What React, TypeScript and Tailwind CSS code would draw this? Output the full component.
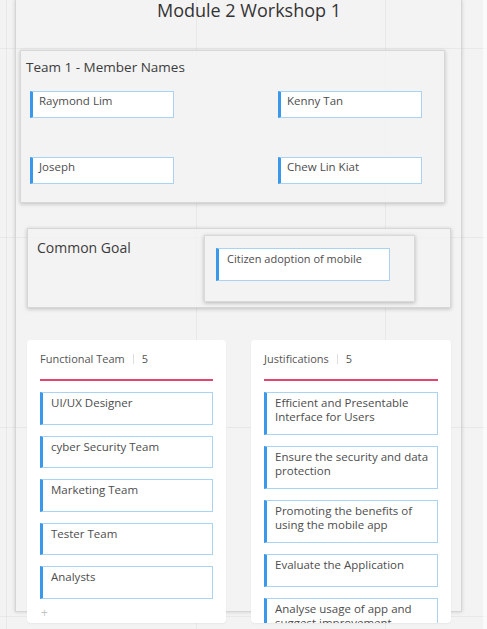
const members = ['Raymond Lim', 'Kenny Tan', 'Joseph', 'Chew Lin Kiat']

const columns = [
  {
    title: 'Functional Team',
    items: ['UI/UX Designer', 'cyber Security Team', 'Marketing Team', 'Tester Team', 'Analysts'],
    showAdd: true,
    width: 'w-[199px]',
  },
  {
    title: 'Justifications',
    items: [
      'Efficient and Presentable Interface for Users',
      'Ensure the security and data protection',
      'Promoting the benefits of using the mobile app',
      'Evaluate the Application',
      'Analyse usage of app and suggest improvement',
    ],
    showAdd: false,
    width: 'w-[200px]',
  },
]

function GridLines() {
  return (
    <div className="pointer-events-none absolute inset-0">
      <div className="absolute left-[6px] top-0 h-full w-px bg-black/[0.045]" />
      <div className="absolute left-[196px] top-0 h-full w-px bg-black/[0.045]" />
      <div className="absolute left-[385px] top-0 h-full w-px bg-black/[0.045]" />
      <div className="absolute left-0 top-[48px] h-px w-full bg-black/[0.045]" />
      <div className="absolute left-0 top-[237px] h-px w-full bg-black/[0.045]" />
      <div className="absolute left-0 top-[427px] h-px w-full bg-black/[0.045]" />
      <div className="absolute left-0 top-[616px] h-px w-full bg-black/[0.045]" />
    </div>
  )
}

function StickyCard({ text }: { text: string }) {
  return (
    <div className="min-h-[32.5px] border border-[#aad3f3] border-l-[3px] border-l-[#3a98ea] bg-white pb-[10px] pl-[8px] pr-[6px] pt-[3px] text-[11.5px] leading-[14px] text-[#4d4d4d]">
      {text}
    </div>
  )
}

function Column({ col }: { col: (typeof columns)[number] }) {
  return (
    <div className={`${col.width} h-[283px] overflow-hidden rounded-[4px] bg-white px-[13px] shadow-[0_1px_2px_rgba(0,0,0,0.05)]`}>
      <div className="flex items-center pb-[13px] pt-[12px] text-[11px] leading-[14px] text-[#555]">
        <span>{col.title}</span>
        <span className="mx-[8px] h-[10px] w-px bg-[#dedede]" />
        <span>5</span>
      </div>
      <div className="h-[1.5px] bg-[rgb(228,68,112)]" />
      <div className="mt-[11.5px] flex flex-col gap-[11px]">
        {col.items.map((t) => (
          <StickyCard key={t} text={t} />
        ))}
      </div>
      {col.showAdd && (
        <div className="mt-[8px] pl-[1px] text-[12px] leading-[12px] text-[#c4c4c4]">+</div>
      )}
    </div>
  )
}

export default function App() {
  return (
    <div className="relative h-[629px] w-[487px] overflow-hidden bg-[#f3f3f3] font-['Open_Sans',sans-serif]">
      <GridLines />
      <div className="absolute right-0 top-0 h-full w-[4px] bg-white/60" />

      <div className="relative ml-[15px] h-[612px] w-[447px] border-x border-b border-[#d6d6d6] shadow-[0_0_4px_rgba(0,0,0,0.16)]">
        <h1 className="pl-[21px] text-center text-[18px] leading-[20px] text-[#333]">Module 2 Workshop 1</h1>

        <div className="ml-[4px] mt-[30px] h-[153px] w-[425px] border border-[#d7d7d7] bg-[#f2f2f2]/80 shadow-[0_1px_4px_rgba(0,0,0,0.22)]">
          <div className="pl-[5px] pt-[9px] text-[13.5px] leading-[14px] text-[#3c3c3c]">Team 1 - Member Names</div>
          <div className="ml-[9px] mt-[17px] grid grid-cols-[144px_144px] gap-x-[104px] gap-y-[39px]">
            {members.map((m) => (
              <div
                key={m}
                className="h-[27px] border border-[#aad3f3] border-l-[3px] border-l-[#3a98ea] bg-white pl-[6px] pt-[1px] text-[11.5px] leading-[16px] text-[#4d4d4d]"
              >
                {m}
              </div>
            ))}
          </div>
        </div>

        <div className="ml-[11px] mt-[25px] flex h-[80px] w-[424px] border border-[#d7d7d7] bg-[#f2f2f2]/80 shadow-[0_1px_4px_rgba(0,0,0,0.22)]">
          <div className="w-[176px] pl-[9px] pt-[12px] text-[14px] leading-[14px] text-[#3c3c3c]">Common Goal</div>
          <div className="mt-[6px] h-[67px] w-[211px] border border-[#d9d9d9] bg-[#f3f3f3]/80 pl-[11px] pt-[12px] shadow-[0_1px_4px_rgba(0,0,0,0.25)]">
            <div className="h-[33px] w-[174px] border border-[#aad3f3] border-l-[3px] border-l-[#3a98ea] bg-white pl-[8px] pt-[3px] text-[11px] leading-[14px] text-[#4d4d4d]">
              Citizen adoption of mobile
            </div>
          </div>
        </div>

        <div className="ml-[11px] mt-[32px] flex gap-[25px]">
          {columns.map((c) => (
            <Column key={c.title} col={c} />
          ))}
        </div>
      </div>
    </div>
  )
}
